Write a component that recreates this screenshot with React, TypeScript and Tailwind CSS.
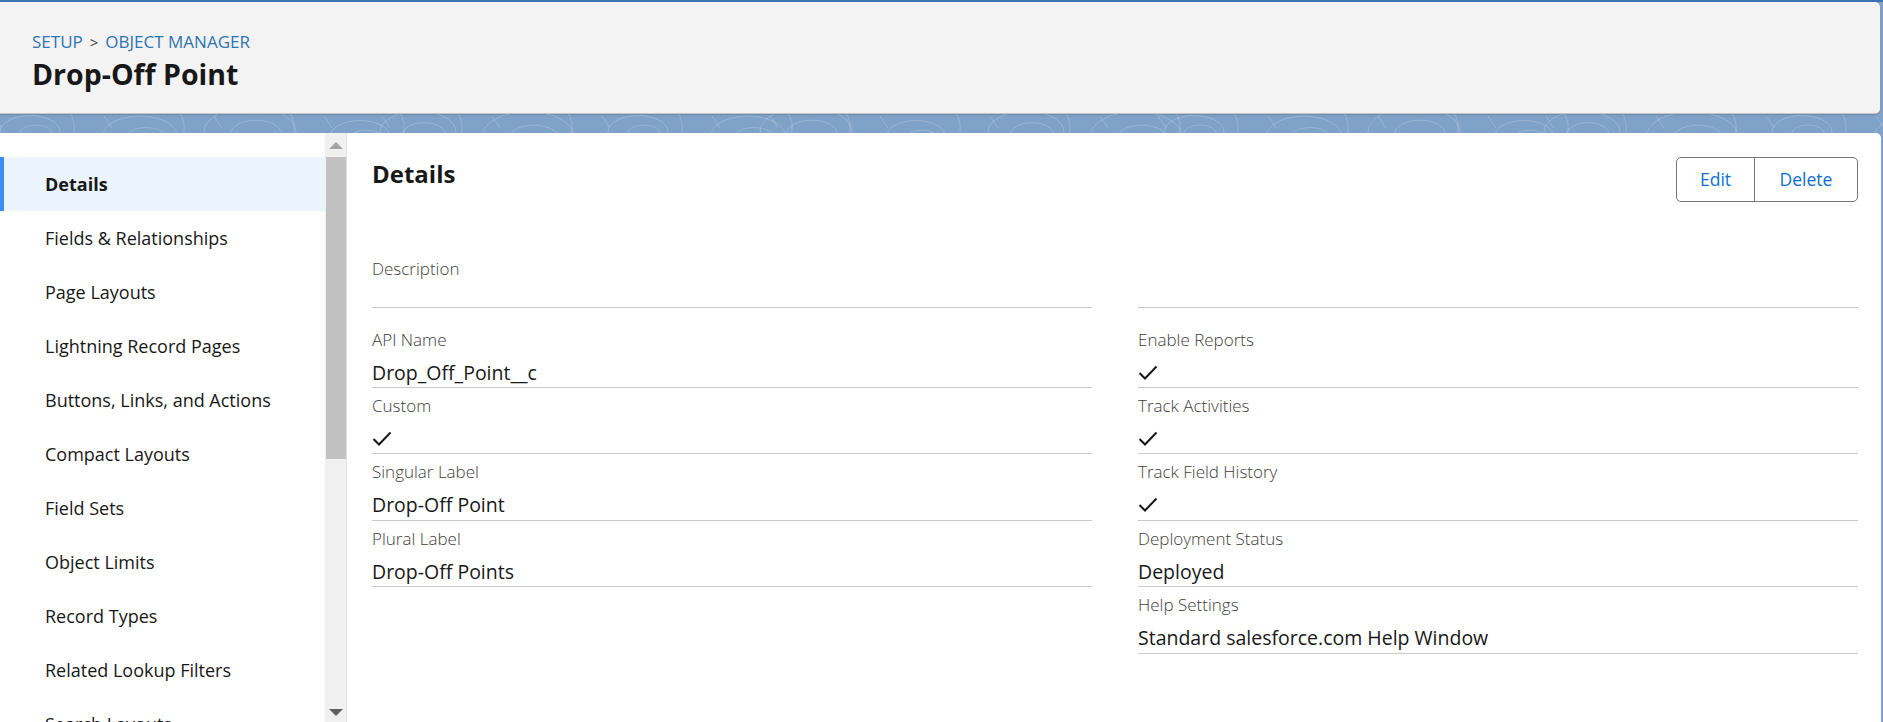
const navItems = [
  "Details",
  "Fields & Relationships",
  "Page Layouts",
  "Lightning Record Pages",
  "Buttons, Links, and Actions",
  "Compact Layouts",
  "Field Sets",
  "Object Limits",
  "Record Types",
  "Related Lookup Filters",
  "Search Layouts",
];

type Row = { label: string; value?: string; check?: boolean };

const leftRows: Row[] = [
  { label: "API Name", value: "Drop_Off_Point__c" },
  { label: "Custom", check: true },
  { label: "Singular Label", value: "Drop-Off Point" },
  { label: "Plural Label", value: "Drop-Off Points" },
];

const rightRows: Row[] = [
  { label: "Enable Reports", check: true },
  { label: "Track Activities", check: true },
  { label: "Track Field History", check: true },
  { label: "Deployment Status", value: "Deployed" },
  { label: "Help Settings", value: "Standard salesforce.com Help Window" },
];

const font = { fontFamily: '"Open Sans", "Noto Sans", sans-serif' };

function Check() {
  return (
    <svg width="20" height="16" viewBox="0 0 20 16" className="mt-[5px] block">
      <path d="M1.5 8 L7 13.5 L18.5 1.5" fill="none" stroke="#181818" strokeWidth="2" />
    </svg>
  );
}

function Field({ row, pb }: { row: Row; pb: string }) {
  return (
    <div className={`border-b border-[#c9c9c9] pt-[8px] ${pb}`}>
      <div className="text-[17px] font-light leading-[20px] text-[#3e3e3c]">{row.label}</div>
      <div className="mt-[10px] flex h-[26px] items-start text-[19.5px] leading-[26px] text-[#181818]">
        {row.check ? <Check /> : row.value}
      </div>
    </div>
  );
}

function Topo() {
  // faint contour lines in the banner strip
  const loops = [];
  for (let i = 0; i < 20; i++) {
    const x = i * 97 + (i % 4) * 13;
    const big = 30 + (i % 3) * 8;
    loops.push(
      <g key={i} fill="none" stroke="rgba(255,255,255,0.2)" strokeWidth="1">
        <ellipse cx={x + 30} cy={18 + (i % 2) * 5} rx={big} ry={big * 0.55} />
        <ellipse cx={x + 36} cy={20 + (i % 2) * 5} rx={big * 0.55} ry={big * 0.3} />
        <path d={`M${x + 68} -4 Q ${x + 78} 9 ${x + 72} 24`} />
        <path d={`M${x - 6} 2 L ${x + 2} 14`} />
      </g>
    );
  }
  return (
    <svg width="1883" height="19" viewBox="0 0 1883 19" className="block">
      {loops}
    </svg>
  );
}

export default function App() {
  return (
    <div className="flex h-[722px] w-full flex-col overflow-hidden bg-[#7fa2c9]" style={font}>
      <div className="h-[2px] bg-[#3b72b4]" />
      <header className="mr-[3px] flex h-[112px] flex-col rounded-r-[5px] border-b border-[#c3c3c3] bg-[#f3f3f3] pl-[32px] pt-[28px] shadow-[0_1px_2px_rgba(0,0,0,0.15)]">
        <div className="flex items-center text-[17px] leading-[24px] text-[#2f74b4]">
          <span>SETUP</span>
          <span className="mx-[7px] text-[15px] text-[#3e3e3c]">&gt;</span>
          <span>OBJECT MANAGER</span>
        </div>
        <h1 className="mt-[2px] text-[28.5px] font-bold leading-[36px] text-[#181818]">Drop-Off Point</h1>
      </header>
      <div className="h-[19px] overflow-hidden">
        <Topo />
      </div>

      <div className="mr-[2px] flex min-h-0 flex-1">
        <aside className="flex w-[348px] shrink-0 bg-white">
          <nav className="w-[325px] pt-[24px]">
            {navItems.map((item, i) => (
              <div
                key={item}
                className={`flex h-[54px] items-center text-[18px] text-[#181818] ${
                  i === 0
                    ? "border-l-4 border-[#3d8ef0] bg-[#ebf3fd] pl-[41px] font-bold"
                    : "pl-[45px]"
                }`}
              >
                {item}
              </div>
            ))}
          </nav>
          <div className="flex w-[22px] flex-col items-center border-r border-[#e3e3e3] bg-[#f0f0f0]">
            <div className="mt-[9px] h-0 w-0 border-x-[7px] border-b-[7px] border-x-transparent border-b-[#a3a3a3]" />
            <div className="mt-[8px] h-[302px] w-[20px] bg-[#c1c1c1]" />
            <div className="flex-1" />
            <div className="mb-[6px] h-0 w-0 border-x-[7px] border-t-[7px] border-x-transparent border-t-[#606060]" />
          </div>
        </aside>

        <main className="flex-1 rounded-tr-[5px] bg-white pl-[24px] pr-[23px] pt-[24px]">
          <div className="flex items-start justify-between">
            <h2 className="text-[24px] font-bold leading-[34px] text-[#181818]">Details</h2>
            <div className="flex h-[45px] overflow-hidden rounded-[5px] border border-[#767676] text-[17.5px] text-[#0b6fd0]">
              <button className="w-[78px] border-r border-[#767676]">Edit</button>
              <button className="w-[102px]">Delete</button>
            </div>
          </div>

          <div className="mt-[57px] grid grid-cols-2 gap-x-[46px]">
            <div>
              <div className="h-[49px] border-b border-[#c9c9c9] text-[17px] font-light leading-[20px] text-[#3e3e3c]">
                Description
              </div>
              <div className="mt-[14px]">
                {leftRows.map((r, i) => (
                  <Field key={r.label} row={r} pb={i === 2 ? "pb-[2px]" : "pb-[1px]"} />
                ))}
              </div>
            </div>
            <div>
              <div className="h-[49px] border-b border-[#c9c9c9]" />
              <div className="mt-[14px]">
                {rightRows.map((r, i) => (
                  <Field
                    key={r.label}
                    row={r}
                    pb={i === 2 || i === 4 ? "pb-[2px]" : "pb-[1px]"}
                  />
                ))}
              </div>
            </div>
          </div>
        </main>
      </div>
    </div>
  );
}
